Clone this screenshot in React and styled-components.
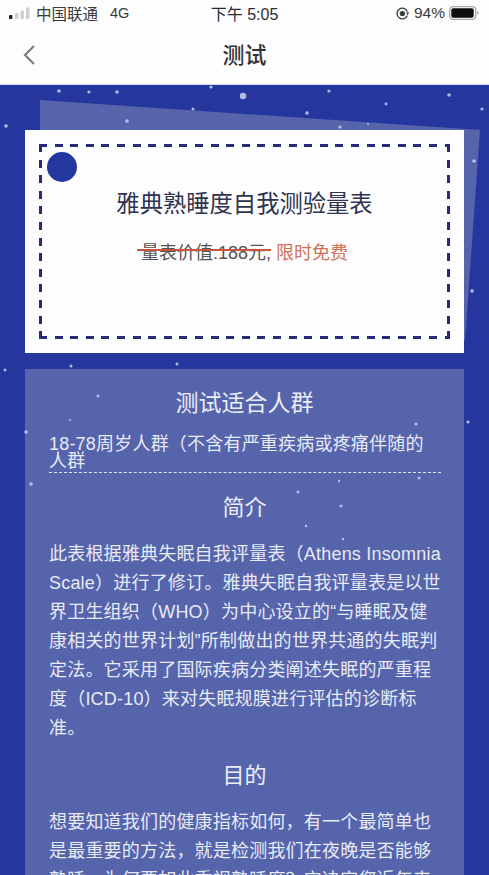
import React from "react";
import styled, { createGlobalStyle } from "styled-components";

const Global = createGlobalStyle`
  html, body { margin: 0; padding: 0; background: #26369f; }
  * { box-sizing: border-box; }
`;

const Page = styled.div`
  width: 489px;
  height: 875px;
  overflow: hidden;
  display: flex;
  flex-direction: column;
  font-family: "Liberation Sans", "Noto Sans CJK SC", sans-serif;
`;

const Header = styled.header`
  flex: none;
  height: 85px;
  background: #fdfdfd;
  border-bottom: 1px solid #d6d9e6;
  display: flex;
  flex-direction: column;
`;

const StatusBar = styled.div`
  height: 28px;
  padding: 0 10px 2px 9px;
  display: grid;
  grid-template-columns: 1fr auto 1fr;
  align-items: center;
  color: #3a3a3c;
  font-size: 15.5px;
`;

const StatusLeft = styled.div`
  display: flex;
  align-items: center;
`;

const Carrier = styled.span`
  margin-left: 6px;
`;

const Network = styled.span`
  margin-left: 12px;
  font-size: 14.5px;
`;

const Clock = styled.div`
  font-size: 16px;
  color: #2c2c2e;
  margin-left: 1px;
`;

const StatusRight = styled.div`
  display: flex;
  align-items: center;
  justify-content: flex-end;
  gap: 4px;
`;

const Nav = styled.nav`
  flex: 1;
  position: relative;
  display: flex;
  align-items: center;
  justify-content: center;
  padding-bottom: 1px;
`;

const NavTitle = styled.h1`
  margin: 0;
  font-size: 22px;
  line-height: 28px;
  font-weight: 500;
  color: #333;
`;

const BackIcon = styled.svg`
  position: absolute;
  left: 22px;
  top: 16px;
`;

const Body = styled.main`
  flex: 1;
  min-height: 0;
  position: relative;
  padding: 45px 25px 0;
  background: #26369f;
`;

const BackSheet = styled.div`
  position: absolute;
  left: 40px;
  top: 15px;
  width: 440px;
  height: 240px;
  background: #5564ab;
  clip-path: polygon(0 0, 100% 12.5%, 96.6% 100%, 0 100%);
`;

const Stars = styled.svg`
  position: absolute;
  left: 0;
  top: 0;
  z-index: 3;
  pointer-events: none;
  opacity: 0.85;
  filter: blur(0.5px);
`;

const Ticket = styled.section`
  position: relative;
  z-index: 4;
  height: 223px;
  padding: 14px;
  background: #fdfdfd;
`;

const DashFrame = styled.div`
  position: relative;
  height: 195px;
  display: flex;
  flex-direction: column;
  align-items: center;
  --c: #28287f;
  background:
    repeating-linear-gradient(90deg, var(--c) 0 8px, transparent 8px 15.6px) 0 0 / 100% 3px no-repeat,
    repeating-linear-gradient(90deg, var(--c) 0 8px, transparent 8px 15.6px) 0 100% / 100% 3px no-repeat,
    repeating-linear-gradient(180deg, var(--c) 0 8px, transparent 8px 15.6px) 0 0 / 3px 100% no-repeat,
    repeating-linear-gradient(180deg, var(--c) 0 8px, transparent 8px 15.6px) 100% 0 / 3px 100% no-repeat;
`;

const Hole = styled.span`
  position: absolute;
  left: 8px;
  top: 8px;
  width: 30px;
  height: 30px;
  border-radius: 50%;
  background: #25389f;
`;

const TicketTitle = styled.h2`
  margin: 43px 0 0;
  font-size: 23.3px;
  line-height: 34px;
  font-weight: 400;
  color: #2e3350;
`;

const Price = styled.p`
  margin: 19px 0 0;
  font-size: 18px;
  line-height: 26px;
  color: #555;
`;

const OldPrice = styled.span`
  position: relative;
  &::after {
    content: "";
    position: absolute;
    left: -4px;
    right: 0;
    top: 6px;
    height: 2px;
    background: #c8553f;
  }
`;

const Free = styled.span`
  color: #d2705a;
`;

const Panel = styled.section`
  position: relative;
  margin-top: 16px;
  padding: 18px 24px 0;
  background: #5564ab;
  color: #e8eaf5;
`;

const SectionTitle = styled.h3`
  margin: ${(p) => p.$top || 0}px 0 0;
  text-align: center;
  font-size: ${(p) => p.$size || 22}px;
  line-height: 32px;
  font-weight: 400;
  color: #eceef7;
`;

const Audience = styled.p`
  margin: 17px 0 0;
  padding-bottom: 2px;
  width: 392px;
  font-size: 18px;
  line-height: 17px;
  letter-spacing: 0.2px;
  border-bottom: 1px dashed #e6e8f3;
`;

const Paragraph = styled.p`
  margin: ${(p) => p.$top}px 0 0;
  width: 392px;
  font-size: 18px;
  line-height: 29px;
  letter-spacing: 0.2px;
`;

const STARS = [
  [59, 6, 1.8], [89, 7, 1.6], [117, 7, 1.8], [211, 2, 1.6], [243, 11, 3.2], [329, 6, 1.6],
  [449, 10, 1.8], [386, 19, 1.4], [193, 24, 1.5], [307, 28, 1.8], [127, 36, 1.8], [6, 41, 1.8],
  [482, 24, 1.6], [340, 42, 1.6], [368, 39, 1], [159, 46, 1], [474, 76, 1.8], [472, 206, 1.8],
  [71, 281, 1.5], [177, 279, 1.5], [5, 285, 1.5], [98, 311, 1.5], [70, 335, 1], [26, 347, 1.8],
  [416, 339, 1.6], [468, 337, 1.6], [31, 399, 1.8], [298, 407, 1.5], [339, 396, 1.2], [341, 421, 1.6],
  [306, 441, 1.2], [343, 454, 1.2], [419, 393, 1.5],
];

function SignalIcon() {
  return (
    <svg width="21" height="13" viewBox="0 0 21 13" aria-hidden="true">
      <rect x="0" y="8" width="3.4" height="4" rx="1" fill="#1c1c1e" />
      <rect x="6" y="6" width="3.4" height="6" rx="1" fill="#cfcfd2" />
      <rect x="11.5" y="3.5" width="3.4" height="8.5" rx="1" fill="#cfcfd2" />
      <rect x="17" y="0.5" width="3.4" height="11.5" rx="1" fill="#cfcfd2" />
    </svg>
  );
}

function RotationIcon() {
  return (
    <svg width="15" height="15" viewBox="0 0 15 15" aria-hidden="true">
      <path d="M12.4 9.6A5.4 5.4 0 1 1 12.4 5.4" fill="none" stroke="#3a3a3c" strokeWidth="1.3" />
      <path d="M10.9 6.6h3.4L12.6 9z" fill="#3a3a3c" />
      <circle cx="7.4" cy="7.5" r="2.6" fill="#3a3a3c" />
    </svg>
  );
}

function BatteryIcon() {
  return (
    <svg width="30" height="14" viewBox="0 0 30 14" aria-hidden="true">
      <rect x="0.7" y="0.7" width="26" height="12.6" rx="3.4" fill="none" stroke="#a9a9ac" strokeWidth="1.3" />
      <rect x="2.3" y="2.3" width="22.4" height="9.4" rx="2" fill="#0d0d0f" />
      <path d="M28.2 5v4c.8-.3 1.3-1 1.3-2s-.5-1.700-1.300-2z" fill="#a9a9ac" />
    </svg>
  );
}

export default function App() {
  return (
    <Page>
      <Global />
      <Header>
        <StatusBar>
          <StatusLeft>
            <SignalIcon />
            <Carrier>中国联通</Carrier>
            <Network>4G</Network>
          </StatusLeft>
          <Clock>下午 5:05</Clock>
          <StatusRight>
            <RotationIcon />
            <span>94%</span>
            <BatteryIcon />
          </StatusRight>
        </StatusBar>
        <Nav>
          <BackIcon width="14" height="22" viewBox="0 0 14 22" aria-hidden="true">
            <path d="M12 2 3 11l9 9" fill="none" stroke="#7d7d80" strokeWidth="2.200" />
          </BackIcon>
          <NavTitle>测试</NavTitle>
        </Nav>
      </Header>
      <Body>
        <BackSheet />
        <Ticket>
          <DashFrame>
            <Hole />
            <TicketTitle>雅典熟睡度自我测验量表</TicketTitle>
            <Price>
              <OldPrice>量表价值:188元,</OldPrice> <Free>限时免费</Free>
            </Price>
          </DashFrame>
        </Ticket>
        <Panel>
          <SectionTitle $size={23}>测试适合人群</SectionTitle>
          <Audience>18-78周岁人群（不含有严重疾病或疼痛伴随的人群</Audience>
          <SectionTitle $top={19}>简介</SectionTitle>
          <Paragraph $top={16}>
            此表根据雅典失眠自我评量表（Athens Insomnia Scale）进行了修订。雅典失眠自我评量表是以世界卫生组织（WHO）为中心设立的“与睡眠及健康相关的世界计划”所制做出的世界共通的失眠判定法。它采用了国际疾病分类阐述失眠的严重程度（ICD-10）来对失眠规膜进行评估的诊断标准。
          </Paragraph>
          <SectionTitle $top={17}>目的</SectionTitle>
          <Paragraph $top={16}>
            想要知道我们的健康指标如何，有一个最简单也是最重要的方法，就是检测我们在夜晚是否能够熟睡。为何要如此重视熟睡度？它决定您近年来的健康状况，也反映出身体与精神的恢复情况，因此值得我们长期关注与记录。
          </Paragraph>
        </Panel>
        <Stars width="489" height="790" viewBox="0 0 489 790" aria-hidden="true">
          {STARS.map(([x, y, r]) => (
            <circle key={`${x}-${y}`} cx={x} cy={y} r={r} fill="#c9d0f5" />
          ))}
        </Stars>
      </Body>
    </Page>
  );
}
